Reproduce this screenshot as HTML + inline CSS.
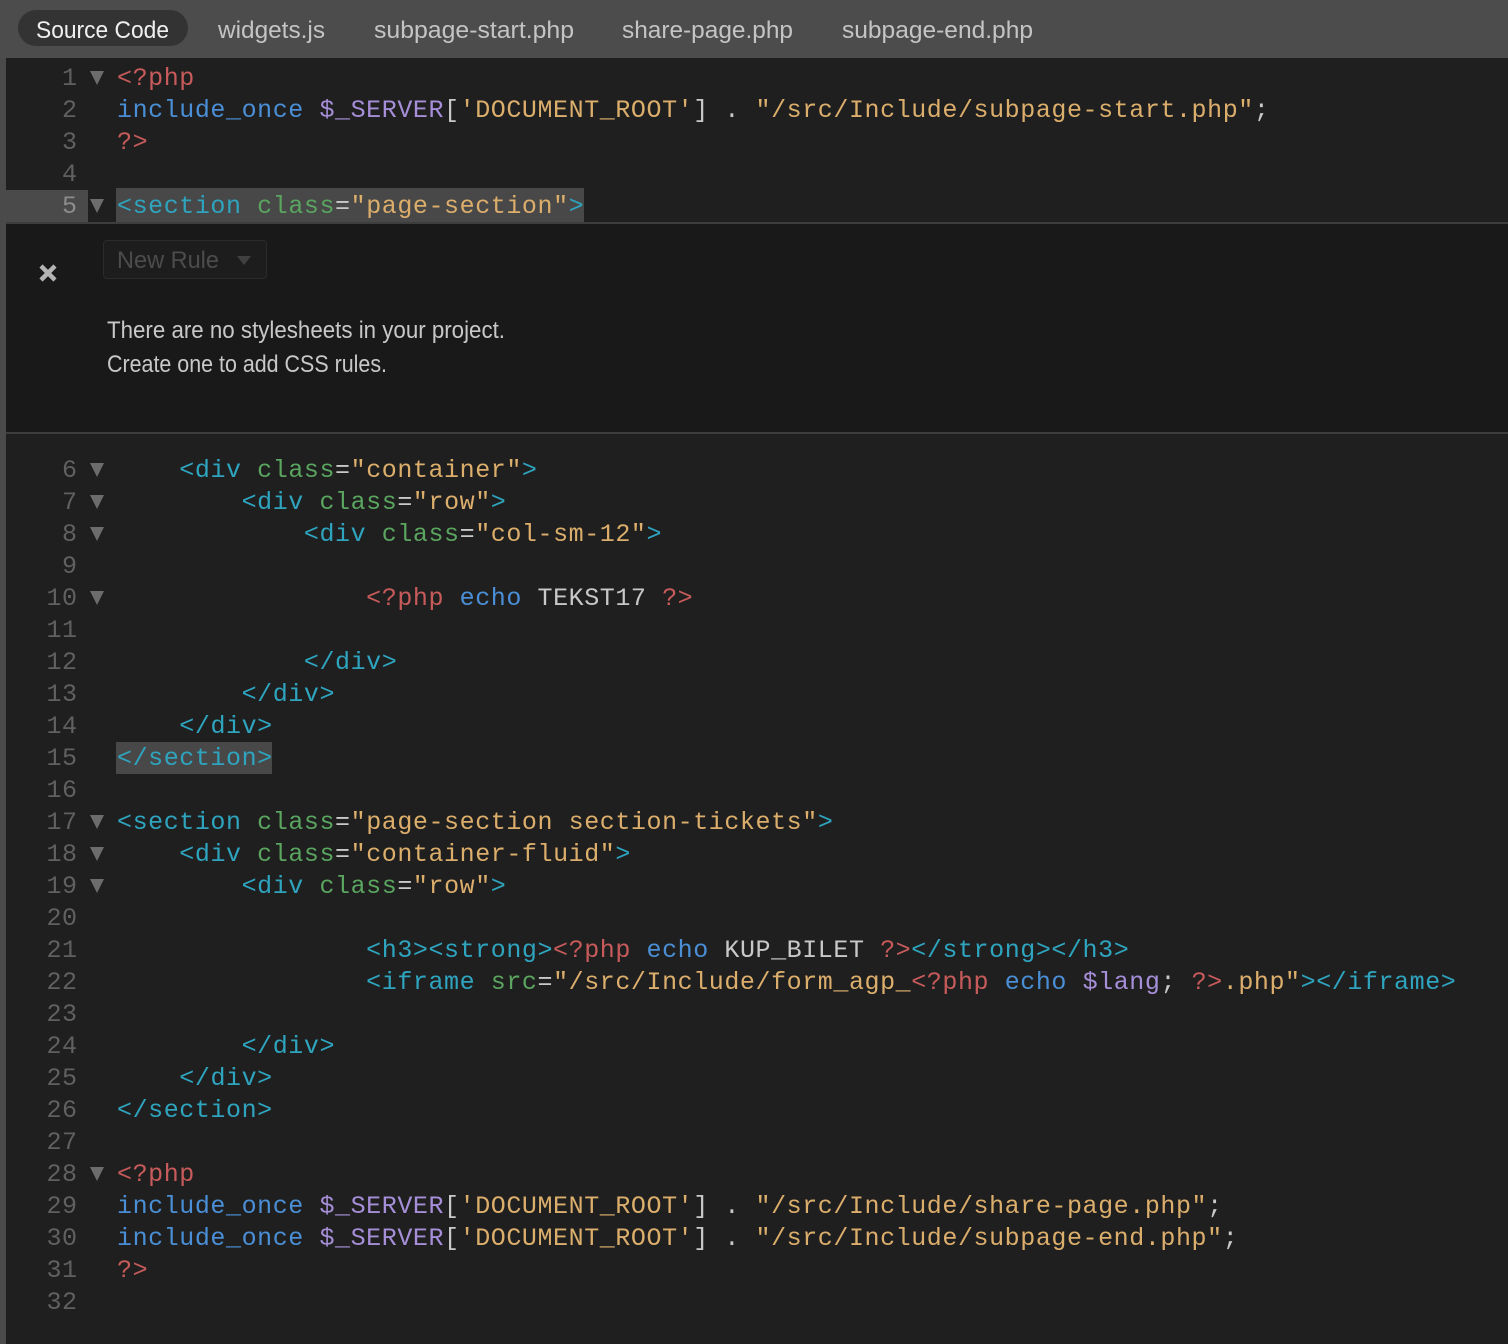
<!DOCTYPE html>
<html><head><meta charset="utf-8">
<style>
html,body{margin:0;padding:0;background:#1f1f1f;width:1508px;height:1344px;overflow:hidden}
#r{position:relative;width:1508px;height:1344px;overflow:hidden;background:#1f1f1f}
.a{position:absolute}
.l{position:absolute;left:117px;height:32px;margin-top:1px;white-space:pre;font:25px/32px "Liberation Mono",monospace;letter-spacing:.57px;color:#c8c8c8}
.n{position:absolute;left:6px;width:71.6px;margin-top:1px;text-align:right;height:32px;white-space:pre;font:25px/32px "Liberation Mono",monospace;letter-spacing:.57px;color:#606060}
.f{position:absolute;left:90px;width:0;height:0;border-left:7px solid transparent;border-right:7px solid transparent;border-top:14px solid #6c6c6c}
.t{color:#2ea4bf}.c{color:#5aa55f}.s{color:#dcae6c}.p{color:#c75b5b}.k{color:#4a8fd6}.v{color:#a68fd8}.w{color:#c8c8c8}
svg{position:absolute;left:0;top:0}
svg text{font-family:"Liberation Sans",sans-serif}
</style></head><body><div id="r">
<div class="a" style="left:0;top:0;width:1508px;height:58px;background:#4c4c4c"></div>
<div class="a" style="left:0;top:58px;width:6px;height:1286px;background:#4a4a4a"></div>
<div class="a" style="left:18px;top:10px;width:170px;height:36px;border-radius:18px;background:#333"></div>
<div class="a" style="left:6px;top:190px;width:82px;height:32px;background:#4a4a4a"></div>
<div class="a" style="left:116px;top:188px;width:468px;height:34px;background:#484848"></div>
<div class="a" style="left:116px;top:742px;width:156px;height:32px;background:#484848"></div>
<div class="a" style="left:6px;top:222px;width:1502px;height:212px;background:#191919;box-sizing:border-box;border-top:2px solid #3d3d3d;border-bottom:2px solid #3d3d3d"></div>
<div class="a" style="left:103px;top:240px;width:164px;height:39px;box-sizing:border-box;border:1.5px solid #2b2b2b;border-radius:4px;background:#1d1d1d"></div>
<div class="a" style="left:237px;top:256px;width:0;height:0;border-left:7px solid transparent;border-right:7px solid transparent;border-top:9px solid #404040"></div>
<svg width="1508" height="1344" viewBox="0 0 1508 1344">
<g font-size="24">
<text x="36" y="38" textLength="133" lengthAdjust="spacingAndGlyphs" fill="#f0f0f0">Source Code</text>
<text x="218" y="38" textLength="107" lengthAdjust="spacingAndGlyphs" fill="#c4c4c4">widgets.js</text>
<text x="374" y="38" textLength="200" lengthAdjust="spacingAndGlyphs" fill="#c4c4c4">subpage-start.php</text>
<text x="622" y="38" textLength="171" lengthAdjust="spacingAndGlyphs" fill="#c4c4c4">share-page.php</text>
<text x="842" y="38" textLength="191" lengthAdjust="spacingAndGlyphs" fill="#c4c4c4">subpage-end.php</text>
<text x="117" y="268" textLength="102" lengthAdjust="spacingAndGlyphs" fill="#4c4c4c">New Rule</text>
<text x="107" y="338" textLength="398" lengthAdjust="spacingAndGlyphs" fill="#c8c8c8">There are no stylesheets in your project.</text>
<text x="107" y="372" textLength="280" lengthAdjust="spacingAndGlyphs" fill="#c8c8c8">Create one to add CSS rules.</text>
</g>
<path d="M41 266 L55 280 M55 266 L41 280" stroke="#b4b4b4" stroke-width="4.5" fill="none"/>
</svg>

<div class="n" style="top:62px">1</div><div class="n" style="top:94px">2</div><div class="n" style="top:126px">3</div><div class="n" style="top:158px">4</div><div class="n" style="top:190px;color:#8c8c8c">5</div>
<div class="n" style="top:454px">6</div><div class="n" style="top:486px">7</div><div class="n" style="top:518px">8</div><div class="n" style="top:550px">9</div><div class="n" style="top:582px">10</div><div class="n" style="top:614px">11</div><div class="n" style="top:646px">12</div><div class="n" style="top:678px">13</div><div class="n" style="top:710px">14</div><div class="n" style="top:742px">15</div><div class="n" style="top:774px">16</div><div class="n" style="top:806px">17</div><div class="n" style="top:838px">18</div><div class="n" style="top:870px">19</div><div class="n" style="top:902px">20</div><div class="n" style="top:934px">21</div><div class="n" style="top:966px">22</div><div class="n" style="top:998px">23</div><div class="n" style="top:1030px">24</div><div class="n" style="top:1062px">25</div><div class="n" style="top:1094px">26</div><div class="n" style="top:1126px">27</div><div class="n" style="top:1158px">28</div><div class="n" style="top:1190px">29</div><div class="n" style="top:1222px">30</div><div class="n" style="top:1254px">31</div><div class="n" style="top:1286px">32</div>

<div class="f" style="top:71px"></div><div class="f" style="top:199px"></div><div class="f" style="top:463px"></div><div class="f" style="top:495px"></div><div class="f" style="top:527px"></div><div class="f" style="top:591px"></div><div class="f" style="top:815px"></div><div class="f" style="top:847px"></div><div class="f" style="top:879px"></div><div class="f" style="top:1167px"></div>

<div class="l" style="top:62px"><span class="p">&lt;?php</span></div>
<div class="l" style="top:94px"><span class="k">include_once</span> <span class="v">$_SERVER</span>[<span class="s">'DOCUMENT_ROOT'</span>] . <span class="s">"/src/Include/subpage-start.php"</span>;</div>
<div class="l" style="top:126px"><span class="p">?&gt;</span></div>
<div class="l" style="top:190px"><span class="t">&lt;section</span> <span class="c">class</span>=<span class="s">"page-section"</span><span class="t">&gt;</span></div>
<div class="l" style="top:454px">    <span class="t">&lt;div</span> <span class="c">class</span>=<span class="s">"container"</span><span class="t">&gt;</span></div>
<div class="l" style="top:486px">        <span class="t">&lt;div</span> <span class="c">class</span>=<span class="s">"row"</span><span class="t">&gt;</span></div>
<div class="l" style="top:518px">            <span class="t">&lt;div</span> <span class="c">class</span>=<span class="s">"col-sm-12"</span><span class="t">&gt;</span></div>
<div class="l" style="top:582px">                <span class="p">&lt;?php</span> <span class="k">echo</span> <span class="w">TEKST17</span> <span class="p">?&gt;</span></div>
<div class="l" style="top:646px">            <span class="t">&lt;/div&gt;</span></div>
<div class="l" style="top:678px">        <span class="t">&lt;/div&gt;</span></div>
<div class="l" style="top:710px">    <span class="t">&lt;/div&gt;</span></div>
<div class="l" style="top:742px"><span class="t">&lt;/section&gt;</span></div>
<div class="l" style="top:806px"><span class="t">&lt;section</span> <span class="c">class</span>=<span class="s">"page-section section-tickets"</span><span class="t">&gt;</span></div>
<div class="l" style="top:838px">    <span class="t">&lt;div</span> <span class="c">class</span>=<span class="s">"container-fluid"</span><span class="t">&gt;</span></div>
<div class="l" style="top:870px">        <span class="t">&lt;div</span> <span class="c">class</span>=<span class="s">"row"</span><span class="t">&gt;</span></div>
<div class="l" style="top:934px">                <span class="t">&lt;h3&gt;&lt;strong&gt;</span><span class="p">&lt;?php</span> <span class="k">echo</span> <span class="w">KUP_BILET</span> <span class="p">?&gt;</span><span class="t">&lt;/strong&gt;&lt;/h3&gt;</span></div>
<div class="l" style="top:966px">                <span class="t">&lt;iframe</span> <span class="c">src</span>=<span class="s">"/src/Include/form_agp_</span><span class="p">&lt;?php</span> <span class="k">echo</span> <span class="v">$lang</span>; <span class="p">?&gt;</span><span class="s">.php"</span><span class="t">&gt;&lt;/iframe&gt;</span></div>
<div class="l" style="top:1030px">        <span class="t">&lt;/div&gt;</span></div>
<div class="l" style="top:1062px">    <span class="t">&lt;/div&gt;</span></div>
<div class="l" style="top:1094px"><span class="t">&lt;/section&gt;</span></div>
<div class="l" style="top:1158px"><span class="p">&lt;?php</span></div>
<div class="l" style="top:1190px"><span class="k">include_once</span> <span class="v">$_SERVER</span>[<span class="s">'DOCUMENT_ROOT'</span>] . <span class="s">"/src/Include/share-page.php"</span>;</div>
<div class="l" style="top:1222px"><span class="k">include_once</span> <span class="v">$_SERVER</span>[<span class="s">'DOCUMENT_ROOT'</span>] . <span class="s">"/src/Include/subpage-end.php"</span>;</div>
<div class="l" style="top:1254px"><span class="p">?&gt;</span></div>
</div></body></html>
